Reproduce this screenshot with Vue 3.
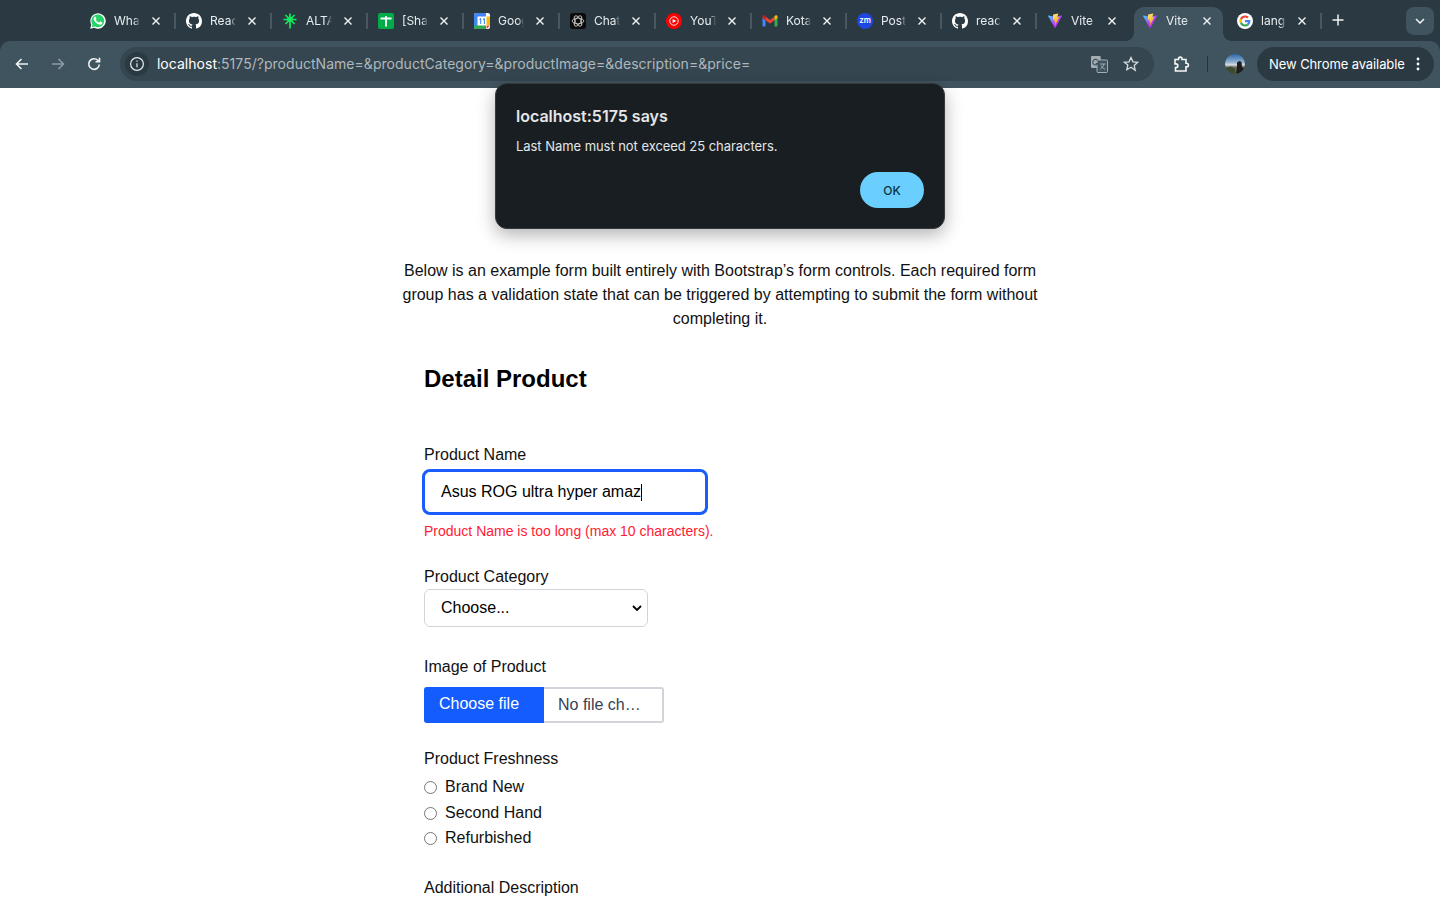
<template>
  <div class="screen">
    <svg class="sprite" aria-hidden="true">
      <defs>
        <linearGradient id="viteBody" x1="0" y1="0" x2="1" y2="1">
          <stop offset="0" stop-color="#41d1ff" />
          <stop offset="0.6" stop-color="#bd34fe" />
        </linearGradient>
        <linearGradient id="viteBolt" x1="0" y1="0" x2="0.4" y2="1">
          <stop offset="0" stop-color="#ffea83" />
          <stop offset="1" stop-color="#ffa800" />
        </linearGradient>
        <linearGradient id="avatarSky" x1="0" y1="0" x2="0" y2="1">
          <stop offset="0" stop-color="#2a66ad" />
          <stop offset="0.4" stop-color="#8fb0cf" />
          <stop offset="0.55" stop-color="#d9dfe3" />
          <stop offset="0.65" stop-color="#6d6a5c" />
          <stop offset="1" stop-color="#4f5a3c" />
        </linearGradient>
      </defs>
      <symbol id="whatsapp" viewBox="0 0 16 16">
        <path fill="#fff" d="M.2 15.800l1.100-4.100A7.700 7.700 0 1 1 4.300 14.700z" />
        <path fill="#25d366" d="M1.700 14.300l.8-2.800A6.400 6.400 0 1 1 4.900 13.600z" />
        <path fill="#fff" d="M5.900 4.400c-.2 0-.5 0-.7.3-.3.3-.8.9-.8 1.900s.8 2.200 1 2.400c.1.200 1.500 2.400 3.800 3.200 1.800.600 2.200.400 2.600.300.500-.100 1.300-.600 1.400-1.100.100-.500.100-1 .100-1.100l-.400-.300-1.400-.700c-.200-.100-.400-.100-.500.100l-.700.800c-.100.200-.300.200-.500.100-.700-.300-1.400-.600-2.100-1.300-.500-.500-.900-1-1.100-1.500-.100-.200 0-.300.100-.400l.500-.700c.100-.100.100-.300 0-.400l-.700-1.600c-.100-.400-.300-.400-.500-.400z" transform="translate(-.6 -.5) scale(.97)" />
      </symbol>
      <symbol id="github" viewBox="0 0 16 16">
        <path fill="#fff" d="M8 0C3.58 0 0 3.58 0 8c0 3.54 2.29 6.53 5.47 7.59.4.07.55-.17.55-.38 0-.19-.01-.82-.01-1.49-2.01.37-2.53-.49-2.69-.94-.09-.23-.48-.94-.82-1.13-.28-.15-.68-.52-.01-.53.63-.01 1.08.58 1.23.82.72 1.21 1.87.87 2.33.66.07-.52.28-.87.51-1.07-1.78-.2-3.64-.89-3.64-3.95 0-.87.31-1.59.82-2.15-.08-.2-.36-1.02.08-2.12 0 0 .67-.21 2.2.82.64-.18 1.32-.27 2-.27.68 0 1.36.09 2 .27 1.53-1.04 2.2-.82 2.2-.82.44 1.1.16 1.92.08 2.12.51.56.82 1.27.82 2.15 0 3.07-1.87 3.75-3.65 3.95.29.25.54.73.54 1.48 0 1.07-.01 1.93-.01 2.2 0 .21.15.46.55.38A8.013 8.013 0 0016 8c0-4.42-3.58-8-8-8z" />
      </symbol>
      <symbol id="star" viewBox="0 0 16 16">
        <path stroke="#12e85c" stroke-width="1.700" fill="none" d="M8 .5v15M1.500 6.500h13M3.400 2l9.200 9M12.600 2l-9.200 9" />
        <circle cx="8" cy="6.500" r="2.800" fill="#12e85c" />
      </symbol>
      <symbol id="sheet" viewBox="0 0 16 16">
        <rect width="16" height="16" rx="2" fill="#00ac47" />
        <path stroke="#fff" stroke-width="1.800" d="M2.500 5.500h11M8 3v10.500" />
      </symbol>
      <symbol id="calendar" viewBox="0 0 16 16">
        <rect width="16" height="16" rx="2" fill="#fff" />
        <path fill="#4285f4" d="M0 2a2 2 0 0 1 2-2h10v3.500H3.500V13H0z" />
        <path fill="#fbbc04" d="M12.500 3.500H16V12h-3.500z" />
        <path fill="#34a853" d="M3.500 12.500H12V16H2a2 2 0 0 1-2-2v-1.500z" />
        <path fill="#ea4335" d="M12.500 12.500H16L12.500 16z" />
        <path fill="#1a73e8" d="M5.400 6l1.200-.800h.6V11h-.9V6.500l-.9.500zM9 6l1.200-.800h.6V11h-.9V6.500L9 7z" />
      </symbol>
      <symbol id="chatgpt" viewBox="0 0 16 16">
        <rect width="16" height="16" rx="3" fill="#0b0b0b" />
        <g fill="none" stroke="#d8d8d8" stroke-width=".8">
          <ellipse cx="8" cy="8" rx="5.800" ry="2.800" />
          <ellipse cx="8" cy="8" rx="5.800" ry="2.800" transform="rotate(60 8 8)" />
          <ellipse cx="8" cy="8" rx="5.800" ry="2.800" transform="rotate(120 8 8)" />
        </g>
      </symbol>
      <symbol id="ytmusic" viewBox="0 0 16 16">
        <circle cx="8" cy="8" r="8" fill="#f00" />
        <circle cx="8" cy="8" r="4.200" fill="none" stroke="#fff" stroke-width=".9" />
        <path fill="#fff" d="M6.600 5.900L10.300 8l-3.700 2.100z" />
      </symbol>
      <symbol id="gmail" viewBox="0 0 16 16">
        <path fill="#4285f4" d="M.5 4.400l3 2.200v7h-2a1 1 0 0 1-1-1z" />
        <path fill="#34a853" d="M12.500 6.600l3-2.200v8.200a1 1 0 0 1-1 1h-2z" />
        <path fill="#ea4335" d="M3.500 3.600L8 7l4.500-3.400v3.600L8 10.600 3.500 7.200z" />
        <path fill="#c5221f" d="M.5 3.600c0-1.100 1.300-1.700 2.200-1l.8.600v4L.5 5z" />
        <path fill="#fbbc04" d="M15.500 3.600c0-1.100-1.300-1.700-2.200-1l-.8.600v4l3-2.200z" />
      </symbol>
      <symbol id="google" viewBox="0 0 48 48">
        <circle cx="24" cy="24" r="24" fill="#fff" />
        <g transform="translate(7.200 7.200) scale(.7)">
          <path fill="#ea4335" d="M24 9.500c3.540 0 6.710 1.220 9.210 3.600l6.850-6.850C35.900 2.380 30.470 0 24 0 14.620 0 6.510 5.380 2.560 13.220l7.980 6.190C12.430 13.720 17.740 9.500 24 9.500z" />
          <path fill="#4285f4" d="M46.980 24.550c0-1.570-.15-3.090-.38-4.550H24v9.020h12.940c-.58 2.960-2.260 5.480-4.780 7.180l7.730 6c4.510-4.180 7.090-10.360 7.090-17.650z" />
          <path fill="#fbbc05" d="M10.530 28.590c-.48-1.450-.76-2.990-.76-4.590s.27-3.140.76-4.590l-7.980-6.190C.92 16.460 0 20.120 0 24c0 3.880.92 7.540 2.560 10.780l7.970-6.190z" />
          <path fill="#34a853" d="M24 48c6.480 0 11.930-2.130 15.890-5.810l-7.730-6c-2.150 1.450-4.920 2.300-8.160 2.300-6.260 0-11.570-4.220-13.470-9.910l-7.980 6.190C6.510 42.620 14.620 48 24 48z" />
        </g>
      </symbol>
      <symbol id="vite" viewBox="0 0 32 32">
        <path fill="url(#viteBody)" d="M29.8836 6.146L16.7418 29.6457c-.2714.4851-.9684.488-1.2439.0052L2.0956 6.1482c-.3-.5262.1498-1.1635.746-1.057l13.156 2.3516a.7144.7144 0 00.2537-.0004l12.8808-2.3478c.5942-.1083 1.0463.5241.7515 1.0513z" />
        <path fill="url(#viteBolt)" d="M22.2644 1.1457l-9.7253 1.9056a.3571.3571 0 00-.2879.3294l-.5982 10.1038c-.0141.238.2045.4227.4367.3691l2.7077-.6248c.2534-.0585.4823.1647.4302.4194l-.8044 3.9393c-.0542.265.1947.4918.4536.4132l1.6723-.5081c.2592-.0787.5084.1487.4536.4137l-1.2784 6.1877c-.08.3871.4348.5981.6495.2662l.1434-.2216 7.9245-15.8147c.1327-.2648-.096-.5668-.3868-.5106l-2.7869.5378c-.2619.0505-.4847-.1933-.4109-.4494l1.8189-6.3056c.0739-.2565-.1494-.5005-.4115-.4491z" />
      </symbol>
    </svg>

    <header class="browser">
      <div class="tabstrip">
        <div v-for="t in tabs" :key="t.id" class="tab" :class="{ active: t.active, plain: t.noSep }">
          <svg v-if="t.icon" class="fav"><use :href="'#' + t.icon" /></svg>
          <span v-else class="zm">zm</span>
          <span class="title">{{ t.title }}</span>
          <svg class="close" viewBox="0 0 10 10"><path d="M1.500 1.500l7 7M8.500 1.500l-7 7" /></svg>
          <i class="sep"></i>
        </div>
        <svg class="plus" viewBox="0 0 12 12"><path d="M6 .5v11M.5 6h11" /></svg>
        <div class="tabmenu">
          <svg viewBox="0 0 10 6"><path d="M1 1l4 4 4-4" /></svg>
        </div>
      </div>

      <div class="toolbar">
        <div class="navbtn">
          <svg viewBox="0 0 16 16"><path d="M14 8H2.500M7.500 3L2.500 8l5 5" /></svg>
        </div>
        <div class="navbtn off">
          <svg viewBox="0 0 16 16"><path d="M2 8h11.500M8.500 3l5 5-5 5" /></svg>
        </div>
        <div class="navbtn">
          <svg viewBox="0 0 16 16"><path d="M13.300 8.500a5.300 5.300 0 1 1-1.500-4.200l1.500 1.500M13.500 1.800v4h-4" /></svg>
        </div>

        <div class="omnibox">
          <div class="siteinfo">
            <svg viewBox="0 0 16 16">
              <circle cx="8" cy="8" r="6.400" />
              <path d="M8 7.200v4M8 4.600v1.200" />
            </svg>
          </div>
          <div class="url"><span class="host">localhost</span>:5175/?productName=&amp;productCategory=&amp;productImage=&amp;description=&amp;price=</div>
          <svg class="translate" viewBox="0 0 18 18">
            <path d="M1 2a1 1 0 0 1 1-1h8.500l1 12H2a1 1 0 0 1-1-1z" fill="#a3adb2" />
            <rect x="7" y="5" width="10.500" height="12.500" rx="1" fill="#40545f" stroke="#a3adb2" />
            <path d="M7.800 5.500a2.800 2.800 0 1 0 .2 3H5.700" fill="none" stroke="#40545f" stroke-width="1.200" />
            <path d="M10 9h5.500M13.800 9c-.5 2.300-1.700 4-3.500 5.200M11.300 10.700c.7 1.500 2 2.800 3.800 3.600" fill="none" stroke="#a3adb2" />
          </svg>
          <svg class="bookmark" viewBox="0 0 16 16">
            <path d="M8 1.500l2 4.300 4.700.5-3.500 3.200 1 4.700L8 11.300l-4.200 2.400 1-4.700L1.300 6.300 6 5.800z" />
          </svg>
        </div>

        <svg class="puzzle" viewBox="0 0 18 18">
          <path d="M3 4.500h3.500v-.6a1.800 1.800 0 0 1 3.600 0v.6H14v3.700h.6a1.800 1.800 0 0 1 0 3.600H14v4.200H3.500v-3.500h.5a1.800 1.800 0 0 0 0-3.600h-1z" />
        </svg>
        <i class="toolsep"></i>
        <svg class="avatar" viewBox="0 0 20 20">
          <clipPath id="avatarClip"><circle cx="10" cy="10" r="10" /></clipPath>
          <g clip-path="url(#avatarClip)">
            <rect width="20" height="20" fill="url(#avatarSky)" />
            <path d="M12 8.500l2.500-1.500 2 1 .5 5 3 2v5h-9l1-7z" fill="#1b1d1f" />
            <path d="M0 14l6-1.500L10 15v5H0z" fill="#3c4a30" />
          </g>
        </svg>
        <div class="update">
          <span>New Chrome available</span>
          <svg viewBox="0 0 4 14"><circle cx="2" cy="2" r="1.400" /><circle cx="2" cy="7" r="1.400" /><circle cx="2" cy="12" r="1.400" /></svg>
        </div>
      </div>
    </header>

    <main class="page">
      <p class="intro">
        Below is an example form built entirely with Bootstrap’s form controls. Each required form
        group has a validation state that can be triggered by attempting to submit the form without
        completing it.
      </p>

      <form class="form" @submit.prevent>
        <h2>Detail Product</h2>

        <label class="lbl first">Product Name</label>
        <div class="namefield">{{ productName }}<i class="caret"></i></div>
        <div class="error">Product Name is too long (max 10 characters).</div>

        <label class="lbl">Product Category</label>
        <div class="selectbox">
          <span>Choose...</span>
          <svg viewBox="0 0 10 6"><path d="M1 1l4 4 4-4" /></svg>
        </div>

        <label class="lbl gap-lg">Image of Product</label>
        <div class="filebox">
          <span class="filebtn">Choose file</span>
          <span class="filename">No file ch…</span>
        </div>

        <label class="lbl">Product Freshness</label>
        <div class="radios">
          <div v-for="r in freshness" :key="r" class="radio">
            <i></i>
            <span>{{ r }}</span>
          </div>
        </div>

        <label class="lbl">Additional Description</label>
      </form>
    </main>

    <div class="dialog">
      <div class="dlg-title">localhost:5175 says</div>
      <div class="dlg-msg">Last Name must not exceed 25 characters.</div>
      <div class="dlg-actions">
        <button type="button">OK</button>
      </div>
    </div>
  </div>
</template>

<script setup>
import { ref } from 'vue';

const productName = ref('Asus ROG ultra hyper amaz');

const freshness = ['Brand New', 'Second Hand', 'Refurbished'];

const tabs = [
  { id: 1, icon: 'whatsapp', title: 'WhatsApp' },
  { id: 2, icon: 'github', title: 'React Router' },
  { id: 3, icon: 'star', title: 'ALTA Academy' },
  { id: 4, icon: 'sheet', title: '[Shared] Tracker' },
  { id: 5, icon: 'calendar', title: 'Google Calendar' },
  { id: 6, icon: 'chatgpt', title: 'ChatGPT' },
  { id: 7, icon: 'ytmusic', title: 'YouTube Music' },
  { id: 8, icon: 'gmail', title: 'Kotak Masuk' },
  { id: 9, icon: '', title: 'Post Attendee' },
  { id: 10, icon: 'github', title: 'react-router' },
  { id: 11, icon: 'vite', title: 'Vite + React', noSep: true },
  { id: 12, icon: 'vite', title: 'Vite + React', active: true, noSep: true },
  { id: 13, icon: 'google', title: 'lang react' },
];
</script>

<style>
html,
body {
  margin: 0;
  height: 100%;
  overflow: hidden;
  background: #fff;
}
</style>

<style scoped>
.screen {
  height: 900px;
  overflow: hidden;
  font-family: "Liberation Sans", Arial, sans-serif;
  color: #111;
}

.sprite {
  position: absolute;
  width: 0;
  height: 0;
}

.browser {
  height: 88px;
  background: #2b3a42;
  font-family: Inter, "Liberation Sans", sans-serif;
}

.tabstrip {
  height: 41px;
  display: flex;
  padding-left: 82px;
}

.tab {
  position: relative;
  flex: 0 0 96px;
  display: flex;
  align-items: center;
  padding-left: 8px;
  box-sizing: border-box;
  color: #e8ecee;
  font-size: 12px;
}

.tab:nth-child(n + 8) {
  flex-basis: 95px;
}

.tab:nth-child(n + 8) .title {
  width: 25px;
}

.tab > * {
  position: relative;
  flex: none;
}

.tab.active::before {
  content: "";
  position: absolute;
  left: 0;
  right: 6px;
  top: 7px;
  bottom: 0;
  background: #40545f;
  border-radius: 10px 10px 0 0;
}

.tab.active::after {
  content: "";
  position: absolute;
  left: -8px;
  right: -2px;
  bottom: 0;
  height: 8px;
  background:
    radial-gradient(circle at 0 0, transparent 7.5px, #40545f 8px) left bottom / 8px 8px no-repeat,
    radial-gradient(circle at 100% 0, transparent 7.5px, #40545f 8px) right bottom / 8px 8px no-repeat;
}

.fav {
  width: 16px;
  height: 16px;
}

.zm {
  width: 16px;
  height: 16px;
  border-radius: 50%;
  background: #1f47e0;
  color: #fff;
  font-size: 8px;
  font-weight: 600;
  line-height: 15px;
  text-align: center;
}

.title {
  width: 26px;
  margin-left: 8px;
  overflow: hidden;
  white-space: nowrap;
  line-height: 16px;
  -webkit-mask-image: linear-gradient(90deg, #000 78%, transparent);
  mask-image: linear-gradient(90deg, #000 78%, transparent);
}

.close {
  width: 10px;
  height: 10px;
  margin-left: 11px;
  fill: none;
  stroke: #f1f3f4;
  stroke-width: 1.400;
}

.sep {
  width: 2px;
  height: 16px;
  margin-left: 13px;
  background: #465a65;
}

.tab.plain .sep {
  visibility: hidden;
}

.plus {
  width: 12px;
  height: 12px;
  margin: 14px 0 0 8px;
  fill: none;
  stroke: #f1f3f4;
  stroke-width: 1.500;
}

.tabmenu {
  width: 28px;
  height: 28px;
  margin: 7px 6px 0 auto;
  border-radius: 8px;
  background: #40545f;
  display: flex;
  align-items: center;
  justify-content: center;
}

.tabmenu svg {
  width: 10px;
  height: 6px;
  fill: none;
  stroke: #f1f3f4;
  stroke-width: 1.500;
}

.toolbar {
  height: 47px;
  padding: 6px 6px 7px 4px;
  box-sizing: border-box;
  background: #40545f;
  border-radius: 10px 10px 0 0;
  display: flex;
  align-items: center;
}

.navbtn {
  width: 36px;
  height: 34px;
  display: flex;
  align-items: center;
  justify-content: center;
}

.navbtn svg {
  width: 16px;
  height: 16px;
  fill: none;
  stroke: #f1f3f4;
  stroke-width: 1.600;
}

.navbtn.off svg {
  stroke: #8c9aa2;
}

.omnibox {
  width: 1035px;
  height: 34px;
  margin-left: 8px;
  border-radius: 17px;
  background: #354650;
  display: flex;
  align-items: center;
  padding-left: 5px;
  box-sizing: border-box;
}

.siteinfo {
  width: 24px;
  height: 24px;
  border-radius: 50%;
  background: #2b3a42;
  display: flex;
  align-items: center;
  justify-content: center;
}

.siteinfo svg {
  width: 16px;
  height: 16px;
  fill: none;
  stroke: #e8ecee;
  stroke-width: 1.200;
}

.url {
  flex: 1;
  margin: 0 0 2px 8px;
  font-size: 14px;
  letter-spacing: 0.03px;
  color: #aeb8bd;
  white-space: nowrap;
}

.host {
  color: #fff;
}

.translate {
  width: 18px;
  height: 18px;
  margin-right: 15px;
}

.bookmark {
  width: 16px;
  height: 16px;
  margin-right: 15px;
  fill: none;
  stroke: #d5dadd;
  stroke-width: 1.300;
}

.puzzle {
  width: 18px;
  height: 18px;
  margin-left: 18px;
  fill: none;
  stroke: #f6f7f8;
  stroke-width: 1.600;
}

.toolsep {
  width: 1px;
  height: 16px;
  margin-left: 17px;
  background: #25323a;
}

.avatar {
  width: 20px;
  height: 20px;
  margin-left: 17px;
}

.update {
  width: 177px;
  height: 34px;
  margin-left: 12px;
  border-radius: 17px;
  background: #2b3a42;
  color: #fff;
  font-size: 13px;
  letter-spacing: -0.1px;
  display: flex;
  align-items: center;
  justify-content: space-between;
  padding: 0 14px 0 12px;
  box-sizing: border-box;
}

.update svg {
  width: 4px;
  height: 14px;
  fill: #fff;
}

.page {
  padding-top: 171px;
}

.intro {
  width: 640px;
  margin: 0 auto;
  font-size: 16px;
  line-height: 24px;
  text-align: center;
}

.form {
  margin-left: 424px;
}

h2 {
  margin: 32px 0 0;
  font-size: 24px;
  line-height: 32px;
  font-weight: 700;
  color: #000;
}

.lbl {
  display: block;
  margin-top: 24px;
  font-size: 16px;
  line-height: 24px;
}

.lbl.first {
  margin-top: 48px;
}

.lbl.gap-lg {
  margin-top: 28px;
}

.namefield {
  width: 286px;
  height: 46px;
  margin: 2px 0 0 -2px;
  padding-left: 16px;
  box-sizing: border-box;
  border: 3px solid #1a5cff;
  border-radius: 8px;
  display: flex;
  align-items: center;
  font-size: 16px;
  color: #000;
}

.caret {
  width: 1px;
  height: 17px;
  background: #000;
}

.error {
  margin-top: 6px;
  font-size: 14px;
  line-height: 20px;
  color: #ff1a33;
}

.selectbox {
  width: 224px;
  height: 38px;
  padding: 0 5px 0 16px;
  box-sizing: border-box;
  border: 1px solid #d1d5db;
  border-radius: 6px;
  display: flex;
  align-items: center;
  justify-content: space-between;
  font-size: 16px;
  color: #000;
}

.selectbox svg {
  width: 10px;
  height: 6px;
  fill: none;
  stroke: #000;
  stroke-width: 1.800;
}

.filebox {
  width: 240px;
  height: 36px;
  margin-top: 8px;
  box-sizing: border-box;
  border: 2px solid #d1d5db;
  border-left: 0;
  border-radius: 3px;
  display: flex;
  font-size: 16px;
}

.filebtn {
  width: 120px;
  margin: -2px 0;
  padding-left: 15px;
  box-sizing: border-box;
  background: #155cff;
  color: #fff;
  line-height: 33px;
  border-radius: 3px 0 0 3px;
}

.filename {
  margin-left: 14px;
  line-height: 32px;
  color: #374151;
}

.radios {
  margin-top: 4px;
}

.radio {
  height: 25.5px;
  display: flex;
  align-items: center;
  font-size: 16px;
}

.radio i {
  width: 13px;
  height: 13px;
  margin-right: 8px;
  box-sizing: border-box;
  border: 1px solid #767676;
  border-radius: 50%;
}

.radio span {
  margin-bottom: 1px;
}

.dialog {
  position: absolute;
  left: 495px;
  top: 83px;
  width: 450px;
  height: 146px;
  box-sizing: border-box;
  padding: 22px 20px 0;
  background: #191e22;
  border: 1px solid #33393d;
  border-radius: 12px;
  box-shadow: 0 6px 18px rgba(0, 0, 0, 0.3);
  font-family: Inter, "Liberation Sans", sans-serif;
}

.dlg-title {
  font-size: 16px;
  line-height: 20px;
  font-weight: 600;
  color: #e4e6e7;
}

.dlg-msg {
  margin-top: 10px;
  font-size: 13px;
  letter-spacing: -0.05px;
  line-height: 20px;
  color: #e4e6e7;
}

.dlg-actions {
  display: flex;
  justify-content: flex-end;
  margin-top: 16px;
}

.dlg-actions button {
  width: 64px;
  height: 36px;
  border: 0;
  border-radius: 18px;
  background: #6acffd;
  color: #0b3446;
  font: 500 12px Inter, "Liberation Sans", sans-serif;
}
</style>
